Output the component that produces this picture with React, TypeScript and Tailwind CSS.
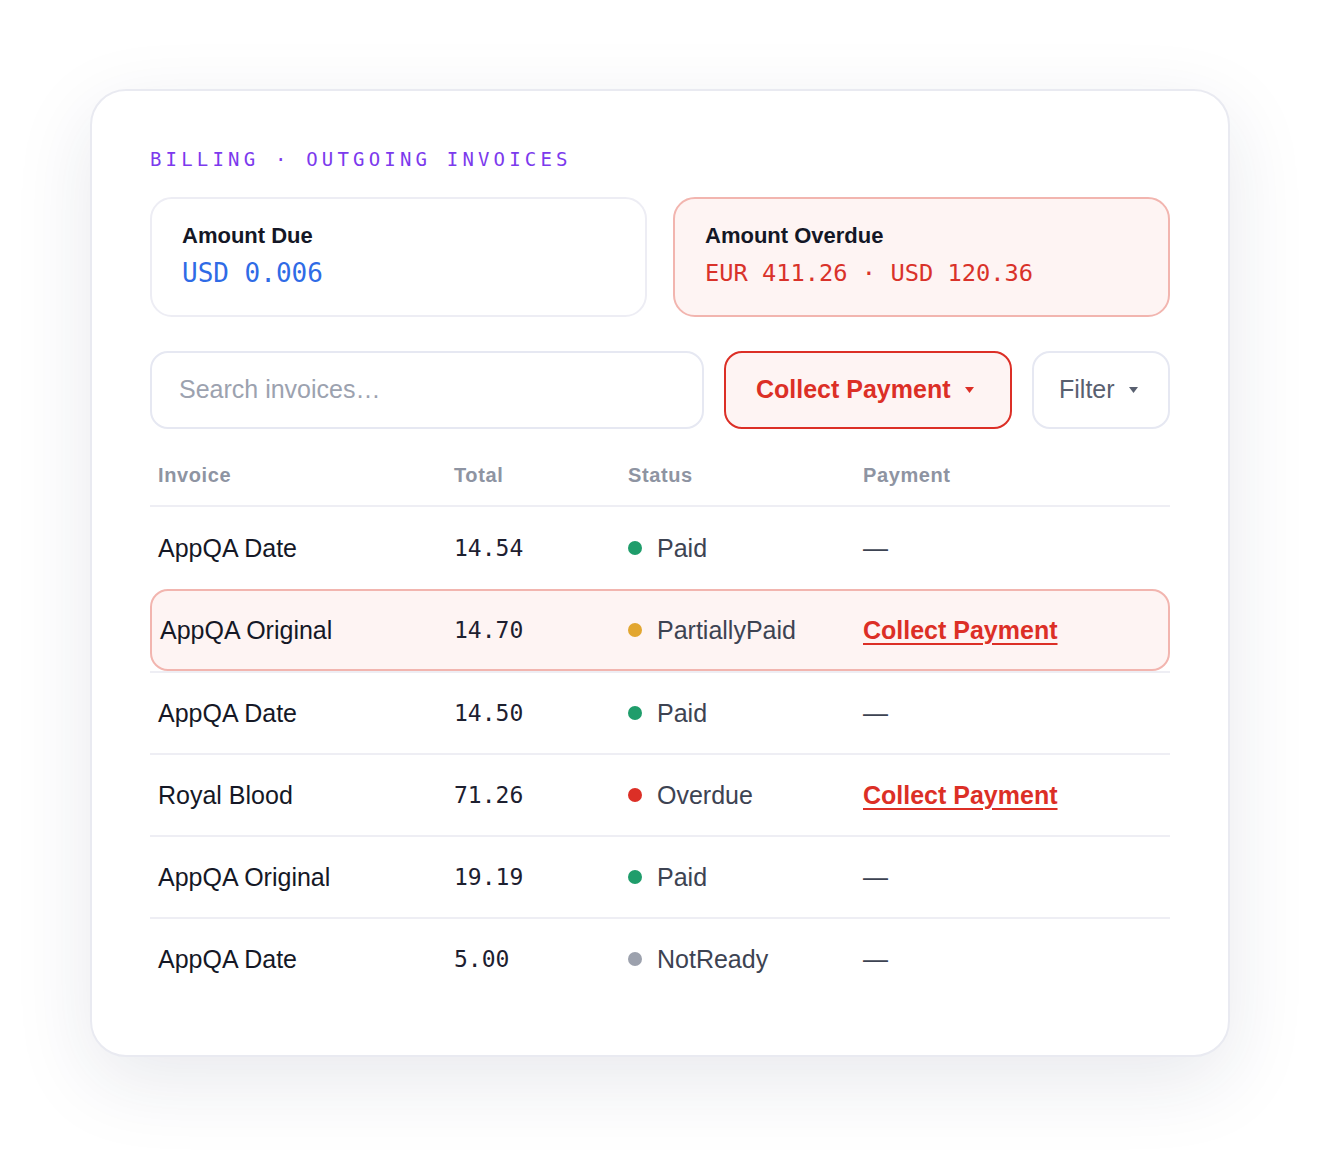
import React from "react";

type Status = "Paid" | "PartiallyPaid" | "Overdue" | "NotReady";

type Invoice = {
  name: string;
  total: string;
  status: Status;
  collect?: boolean;
};

const invoices: Invoice[] = [
  { name: "AppQA Date", total: "14.54", status: "Paid" },
  { name: "AppQA Original", total: "14.70", status: "PartiallyPaid", collect: true },
  { name: "AppQA Date", total: "14.50", status: "Paid" },
  { name: "Royal Blood", total: "71.26", status: "Overdue", collect: true },
  { name: "AppQA Original", total: "19.19", status: "Paid" },
  { name: "AppQA Date", total: "5.00", status: "NotReady" },
];

const dotColor: Record<Status, string> = {
  Paid: "bg-[#1f9d6b]",
  PartiallyPaid: "bg-[#e2a630]",
  Overdue: "bg-[#dc2f26]",
  NotReady: "bg-[#9ca1ad]",
};

const sans = "font-['Liberation_Sans',Arial,sans-serif]";
const mono = "font-['DejaVu_Sans_Mono','Liberation_Mono',monospace]";
const cols = "grid grid-cols-[296px_174px_235px_1fr] items-center px-2";
// the highlighted row carries its own 2px border, so its first column is narrower
const highlightCols = "grid grid-cols-[294px_174px_235px_1fr] items-center px-2";

function Caret({ className }: { className: string }) {
  return (
    <svg width="9" height="6" viewBox="0 0 9 6" className={className}>
      <polygon points="0,0 9,0 4.5,6" fill="currentColor" />
    </svg>
  );
}

function Cells({ row }: { row: Invoice }) {
  return (
    <>
      <span className="text-[25px] leading-[30px] text-[#151826]">{row.name}</span>
      <span className={`${mono} text-[23px] leading-[30px] text-[#1d2030]`}>{row.total}</span>
      <span className="flex items-center gap-[15px] text-[25px] leading-[30px] text-[#3d4352]">
        <span className={`h-[14px] w-[14px] rounded-full ${dotColor[row.status]}`} />
        {row.status}
      </span>
      {row.collect ? (
        <span className="text-[25px] font-bold leading-[30px] text-[#dc2f26] underline decoration-2 underline-offset-[4px]">
          Collect Payment
        </span>
      ) : (
        <span className="text-[25px] leading-[30px] text-[#3d4352]">—</span>
      )}
    </>
  );
}

export default function App() {
  return (
    <div className={`min-h-screen bg-white pt-[89px] pb-[104px] ${sans}`}>
      <div className="mx-auto w-[1140px] rounded-[36px] border-2 border-[#e9eaf1] bg-white px-[58px] pt-[59px] pb-[56px] shadow-[0_24px_80px_rgba(30,41,80,0.1)]">
        {/* Eyebrow */}
        <p className={`${mono} text-[19px] leading-[18px] tracking-[0.22em] text-[#7c3aed]`}>
          BILLING · OUTGOING INVOICES
        </p>

        {/* Totals */}
        <div className="mt-[29px] flex gap-[26px]">
          <div className="flex h-[120px] flex-1 flex-col justify-center gap-[10px] rounded-[22px] border-2 border-[#ededf4] bg-white pb-[4px] pl-[30px]">
            <span className="text-[22px] font-bold leading-[26px] text-[#141726]">Amount Due</span>
            <span className={`${mono} text-[26px] leading-[28px] text-[#2f6be6]`}>USD 0.006</span>
          </div>
          <div className="flex h-[120px] flex-1 flex-col justify-center gap-[10px] rounded-[22px] border-2 border-[#f2b5af] bg-[#fef4f3] pb-[4px] pl-[30px]">
            <span className="text-[22px] font-bold leading-[26px] text-[#141726]">Amount Overdue</span>
            <span className={`${mono} text-[23.7px] leading-[28px] text-[#d9322a]`}>
              EUR 411.26 · USD 120.36
            </span>
          </div>
        </div>

        {/* Toolbar */}
        <div className="mt-[34px] flex h-[78px] gap-5">
          <div className="flex flex-1 items-center rounded-[18px] border-2 border-[#e6e8f2] bg-white pl-[27px] text-[25px] text-[#9ca2af]">
            Search invoices…
          </div>
          <button className="flex w-[288px] items-center gap-[14px] rounded-[18px] border-2 border-[#dc2f26] bg-[#fef4f3] pl-[30px] text-[25px] font-bold text-[#dc2f26]">
            Collect Payment
            <Caret className="text-[#dc2f26]" />
          </button>
          <button className="flex w-[138px] items-center gap-[14px] rounded-[18px] border-2 border-[#e6e8f2] bg-white pl-[25px] text-[25px] text-[#596070]">
            Filter
            <Caret className="text-[#596070]" />
          </button>
        </div>

        {/* Table */}
        <div className={`${cols} border-b-2 border-[#eeeef4] pt-[34px] pb-[18px] text-[20px] font-bold leading-[24px] tracking-[0.03em] text-[#8e94a2]`}>
          <span>Invoice</span>
          <span>Total</span>
          <span>Status</span>
          <span>Payment</span>
        </div>

        {invoices.map((row, i) => {
          const last = i === invoices.length - 1;
          const beforeHighlight = invoices[i + 1]?.status === "PartiallyPaid";

          if (row.status === "PartiallyPaid") {
            return (
              <div key={i} className="border-b-2 border-[#eeeef4]">
                <div className={`${highlightCols} h-[82px] rounded-[18px] border-2 border-[#f2b5af] bg-[#fef4f3]`}>
                  <Cells row={row} />
                </div>
              </div>
            );
          }

          return (
            <div
              key={i}
              className={`${cols} ${
                last ? "h-[80px]" : beforeHighlight ? "h-[82px]" : "h-[82px] border-b-2 border-[#eeeef4]"
              }`}
            >
              <Cells row={row} />
            </div>
          );
        })}
      </div>
    </div>
  );
}
